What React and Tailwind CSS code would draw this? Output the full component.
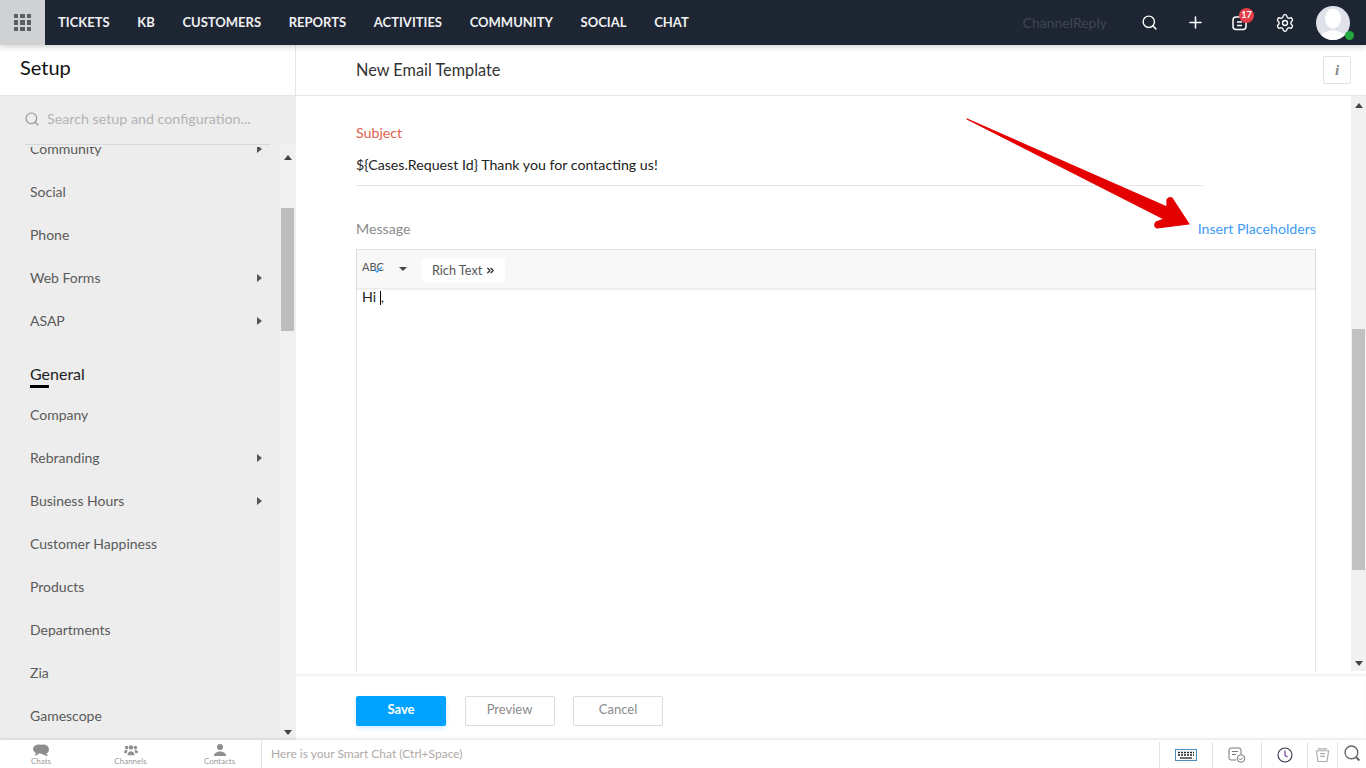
import React from "react";
import { Search, Plus, Settings, ChevronsRight } from "lucide-react";

const nav = ["TICKETS", "KB", "CUSTOMERS", "REPORTS", "ACTIVITIES", "COMMUNITY", "SOCIAL", "CHAT"];

function Caret() {
  return <span className="w-0 h-0 border-y-[4px] border-y-transparent border-l-[5px] border-l-[#555] mr-[1px]" />;
}
function Item({ label, caret }) {
  return (
    <div className="h-[43px] flex items-center justify-between pl-[30px] pr-[2px] text-[14px] text-[#5a5a5a] shrink-0">
      <span>{label}</span>
      {caret && <Caret />}
    </div>
  );
}
function Up() {
  return <span className="w-0 h-0 border-x-[4px] border-x-transparent border-b-[5px] border-b-[#444]" />;
}
function Down() {
  return <span className="w-0 h-0 border-x-[4px] border-x-transparent border-t-[5px] border-t-[#444]" />;
}

export default function App() {
  return (
    <div className="relative w-[1366px] h-[768px] overflow-hidden bg-white flex flex-col font-['Lato','Open_Sans',sans-serif] text-[#222]">
      {/* top bar */}
      <header className="relative z-10 h-[45px] shrink-0 bg-[#1e2533] flex items-center shadow-[0_2px_6px_rgba(0,0,0,0.18)]">
        <div className="w-[45px] h-[45px] bg-[#d0d1d3] grid place-items-center">
          <div className="grid grid-cols-3 gap-[2px]">
            {Array.from({ length: 9 }).map((_, i) => (
              <span key={i} className="w-[4.5px] h-[4.5px] bg-[#5b5e63]" />
            ))}
          </div>
        </div>
        <nav className="flex gap-[27.7px] ml-[13px] text-[13px] font-bold text-[#eef0f2]">
          {nav.map((n) => (
            <span key={n}>{n}</span>
          ))}
        </nav>
        <span className="ml-auto text-[14px] text-[#3f4653]">ChannelReply</span>
        <Search size={17} strokeWidth={2} className="ml-[34px] text-white" />
        <Plus size={19} strokeWidth={2} className="ml-[28px] text-white" />
        <div className="relative ml-[27px] w-[16px] h-[16px]">
          <svg viewBox="0 0 16 16" className="w-[16px] h-[16px]" fill="none" stroke="#fff" strokeWidth="1.5">
            <rect x="1" y="2" width="13" height="12.500" rx="3" />
            <path d="M5 7h5M5 10.500h5" />
          </svg>
          <span className="absolute -top-[7px] left-[7px] w-[15px] h-[15px] rounded-full bg-[#e5404a] text-white text-[9px] font-bold flex items-center justify-center">17</span>
        </div>
        <Settings size={20} strokeWidth={1.6} className="ml-[27px] text-white" />
        <div className="relative ml-[21px] mr-[16px] w-[34px] h-[34px] rounded-full bg-[#dfe2ea]">
          <svg viewBox="0 0 34 34" className="w-[34px] h-[34px] rounded-full">
            <ellipse cx="17" cy="12.500" rx="8" ry="10" fill="#fff" />
            <path d="M3 34c1-6 5-8 14-10 9 2 13 4 14 10z" fill="#fff" />
          </svg>
          <span className="absolute right-[-4px] bottom-[0px] w-[9px] h-[9px] rounded-full bg-[#22a83f]" />
        </div>
      </header>

      <div className="flex-1 flex min-h-0">
        {/* sidebar */}
        <aside className="w-[296px] shrink-0 flex flex-col">
          <div className="h-[50px] shrink-0 bg-white border-r border-[#e6e6e6] pl-[20px] pt-[8px] text-[20px] leading-[28px] text-[#111]">Setup</div>
          <div className="flex-1 min-h-0 bg-[#ededed] border-t border-[#e4e4e4] flex flex-col">
            <div className="h-[49px] shrink-0 ml-[25px] mr-[26px] border-b border-[#d8d8d8] flex items-center gap-[7px] pb-[3px] text-[14.25px] text-[#b3b3b3]">
              <Search size={16} strokeWidth={1.6} className="text-[#8a8f94] shrink-0 -ml-[1px]" />
              <span>Search setup and configuration...</span>
            </div>
            <div className="flex-1 min-h-0 flex">
              <div className="w-[265px] shrink-0 flex flex-col min-h-0">
                <div className="h-[2px] shrink-0" />
                <div className="flex-1 min-h-0 overflow-hidden">
                  <div className="-mt-[20px]">
                    <Item label="Community" caret />
                    <Item label="Social" />
                    <Item label="Phone" />
                    <Item label="Web Forms" caret />
                    <Item label="ASAP" caret />
                    <div className="h-[51px] pl-[30px] pt-[20px] text-[16px] leading-[24px] text-[#222]">
                      <span className="relative inline-block">
                        General
                        <span className="absolute left-0 -bottom-[2px] w-[19px] h-[3px] bg-black" />
                      </span>
                    </div>
                    <Item label="Company" />
                    <Item label="Rebranding" caret />
                    <Item label="Business Hours" caret />
                    <Item label="Customer Happiness" />
                    <Item label="Products" />
                    <Item label="Departments" />
                    <Item label="Zia" />
                    <Item label="Gamescope" />
                  </div>
                </div>
              </div>
              <div className="ml-[14px] w-[17px] bg-[#f0f0f0] flex flex-col items-center">
                <div className="h-[27px] shrink-0 flex items-center justify-center pb-[2px]"><Up /></div>
                <div className="w-[13px] h-[123px] mt-[36px] bg-[#bdbdbd]" />
                <div className="mt-auto h-[16px] flex items-center justify-center"><Down /></div>
              </div>
            </div>
          </div>
        </aside>

        {/* main */}
        <main className="flex-1 min-w-0 flex flex-col">
          <div className="h-[51px] shrink-0 border-b border-[#e6e6e6] flex items-center justify-between pl-[60px] pr-[15px]">
            <span className="text-[16.3px] text-[#333] pt-[1px]">New Email Template</span>
            <span className="w-[28px] h-[28px] rounded-[2px] border border-[#e2e2e2] flex items-center justify-center font-['Liberation_Serif',serif] italic font-bold text-[15px] text-[#888]">i</span>
          </div>
          <div className="flex-1 min-h-0 flex pb-[3px] border-b border-[#eeeeee]">
            <div className="flex-1 min-w-0 pl-[60px] pr-[35px] overflow-hidden">
              <div className="mt-[27px] text-[14.2px] leading-[20px] text-[#e2604c]">Subject</div>
              <div className="mr-[113px] mt-[6px] h-[37px] border-b border-[#e3e5ea] pt-[6px] text-[14.2px] leading-[20px] text-[#222]">{"${Cases.Request Id} Thank you for contacting us!"}</div>
              <div className="mt-[33px] flex justify-between text-[14.2px] leading-[20px]">
                <span className="text-[#8b8b8b]">Message</span>
                <span className="text-[#3d9bf5]">Insert Placeholders</span>
              </div>
              <div className="mt-[10px] h-[500px] border border-[#e3e3e3]">
                <div className="h-[39px] pt-[2px] bg-[#f8f8f8] flex items-center border-b border-[#eaeaea] shadow-[0_1px_2px_rgba(0,0,0,0.06)]">
                  <span className="relative ml-[5px] text-[11px] text-[#555] -mt-[5px]">
                    ABC
                    <svg viewBox="0 0 10 8" className="absolute left-[11px] top-[7px] w-[10px] h-[8px]" fill="none" stroke="#3d9bf5" strokeWidth="1.3"><path d="M1 3l3 3 5-5" /></svg>
                  </span>
                  <span className="ml-[15px] -mt-[2px] w-0 h-0 border-x-[4px] border-x-transparent border-t-[4px] border-t-[#444]" />
                  <span className="ml-[15px] h-[24px] w-[83px] pl-[10px] pt-[1px] bg-white rounded-[3px] flex items-center text-[12.7px] text-[#555]">
                    Rich Text <ChevronsRight size={11} strokeWidth={2.8} className="ml-[3px] text-[#333]" />
                  </span>
                </div>
                <div className="pl-[5px] text-[14.2px] leading-[16px] text-[#222]">
                  Hi <span className="inline-block w-[1px] h-[14px] bg-black align-[-3px]" />,
                </div>
              </div>
            </div>
            <div className="w-[15px] bg-[#f1f1f1] flex flex-col items-center">
              <div className="h-[18px] flex items-center justify-center"><Up /></div>
              <div className="w-[13px] h-[241px] mt-[215px] bg-[#c1c1c1]" />
              <div className="mt-auto h-[16px] flex items-center justify-center"><Down /></div>
            </div>
          </div>
          <div className="h-[65px] shrink-0 flex items-center gap-[18.5px] pl-[60px] pt-[7px] shadow-[inset_0_2px_2px_rgba(0,0,0,0.03)] text-[13px]">
            <button className="w-[90px] h-[30px] pb-[3px] rounded-[2px] bg-[#00a2ff] text-white font-bold shadow-[0_2px_4px_rgba(0,162,255,0.2)]">Save</button>
            <button className="w-[90px] h-[30px] pb-[3px] rounded-[2px] border border-[#dcdcdc] text-[#8a8a8a]">Preview</button>
            <button className="w-[90px] h-[30px] pb-[3px] rounded-[2px] border border-[#dcdcdc] text-[#8a8a8a]">Cancel</button>
          </div>
        </main>
      </div>

      {/* bottom bar */}
      <footer className="relative z-10 h-[28px] shrink-0 bg-white flex items-stretch shadow-[0_-1px_3px_rgba(0,0,0,0.12)]">
        <div className="w-[262px] shrink-0 border-r border-[#e4e4e4] flex text-[8px] text-[#999]">
          <div className="w-[82px] flex flex-col items-center pt-[4px]">
            <svg viewBox="0 0 16 12" className="w-[18px] h-[12px]" fill="#8e8e8e"><ellipse cx="6" cy="5" rx="6" ry="4.500" /><ellipse cx="10.500" cy="5.500" rx="5.500" ry="5" /><path d="M3 8l-1 4 4-2zM13 9l2 3-5-1z" /></svg>
            <span className="leading-[9px] mt-[1px]">Chats</span>
          </div>
          <div className="w-[97px] flex flex-col items-center pt-[4px]">
            <svg viewBox="0 0 16 12" className="w-[14px] h-[12px]" fill="#8e8e8e"><circle cx="8" cy="3" r="2.500" /><circle cx="3" cy="3" r="2" /><circle cx="13" cy="3" r="2" /><path d="M4 12c0-6 8-6 8 0zM0 9c0-3 3-4 4-3l-1 4zM16 9c0-3-3-4-4-3l1 4z" /></svg>
            <span className="leading-[9px] mt-[1px]">Channels</span>
          </div>
          <div className="w-[81px] flex flex-col items-center pt-[4px]">
            <svg viewBox="0 0 12 12" className="w-[12px] h-[12px]" fill="#8e8e8e"><circle cx="6" cy="3" r="3" /><path d="M0 12c0-6 12-6 12 0z" /></svg>
            <span className="leading-[9px] mt-[1px]">Contacts</span>
          </div>
        </div>
        <div className="flex-1 pl-[9px] flex items-center text-[12px] text-[#b0a9a6]">Here is your Smart Chat (Ctrl+Space)</div>
        <div className="flex items-stretch mt-[2px]">
          <div className="w-[53px] border-l border-[#e2e2e2] flex items-center justify-center">
            <svg viewBox="0 0 22 12" className="w-[22px] h-[12px]"><rect x="0.500" y="0.500" width="21" height="11" fill="#fff" stroke="#4a90c2" /><path d="M3 3.500h16M3 6h16" stroke="#222" strokeWidth="1.500" strokeDasharray="2 1" /><path d="M5 9h12" stroke="#222" strokeWidth="1.300" /></svg>
          </div>
          <div className="w-[49px] border-l border-[#e2e2e2] flex items-center justify-center">
            <svg viewBox="0 0 18 16" className="w-[18px] h-[16px]" fill="none" stroke="#777" strokeWidth="1"><path d="M8 13H3a2 2 0 0 1-2-2V3a2 2 0 0 1 2-2h8a2 2 0 0 1 2 2v4" /><path d="M4 4.500h6M4 7.500h4" /><circle cx="13" cy="11.500" r="3.800" /><path d="M11 11.500l1.500 1.500 2.500-2.500" /></svg>
          </div>
          <div className="w-[46px] border-l border-[#e2e2e2] flex items-center justify-center">
            <svg viewBox="0 0 16 16" className="w-[16px] h-[16px]" fill="none" stroke="#334" strokeWidth="1.100"><circle cx="8" cy="8" r="7" /><path d="M8 3.500V8.500l2.500 1.500" stroke="#6a2a8a" /></svg>
          </div>
          <div className="w-[30px] border-l border-[#e2e2e2] flex items-center justify-center">
            <svg viewBox="0 0 16 15" className="w-[15px] h-[14px]" fill="none" stroke="#aaa" strokeWidth="1.200"><path d="M1.500 3h13l-1.500 10.500a1 1 0 0 1-1 1H4a1 1 0 0 1-1-1z" /><path d="M3 1h10M5.500 6h5M5.500 9h5" /></svg>
          </div>
          <div className="w-[29px] border-l border-[#e2e2e2] flex items-start justify-center pt-[3px]">
            <svg viewBox="0 0 16 16" className="w-[17px] h-[17px]" fill="none" stroke="#666" strokeWidth="1.300"><circle cx="7" cy="7" r="6" /><path d="M11.500 11.500l3 3" strokeWidth="2" /></svg>
          </div>
        </div>
      </footer>

      {/* annotation arrow over the page */}
      <svg viewBox="0 0 1366 768" className="absolute inset-0 w-[1366px] h-[768px] pointer-events-none z-20">
        <path d="M967 119 L1167 207 L1167 199.500 Q1169 197 1172 198 L1189 224 L1157 228 Q1153 226 1156 222 L1164 219 Z" fill="#e50000" stroke="#e50000" strokeWidth="1.200" strokeLinejoin="round" />
      </svg>
    </div>
  );
}
